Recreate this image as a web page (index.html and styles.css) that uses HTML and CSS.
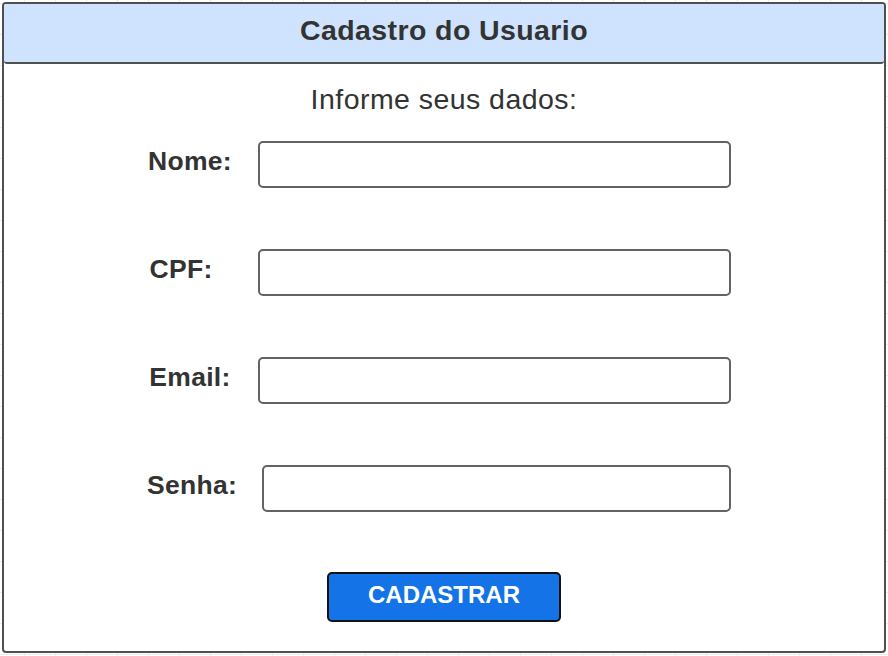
FILE: index.html
```html
<!DOCTYPE html>
<html lang="pt">
<head>
<meta charset="utf-8">
<title>Cadastro do Usuario</title>
<link rel="stylesheet" href="styles.css">
</head>
<body>
<div class="frame">
  <div class="header"><h1 class="title">Cadastro do Usuario</h1></div>
  <div class="content">
    <p class="subtitle">Informe seus dados:</p>
    <div class="fields">
      <div class="row"><label class="label">Nome:</label><div class="input"></div></div>
      <div class="row"><label class="label label-cpf">CPF:</label><div class="input"></div></div>
      <div class="row"><label class="label">Email:</label><div class="input"></div></div>
      <div class="row"><label class="label label-senha">Senha:</label><div class="input input-senha"></div></div>
    </div>
    <div class="actions"><button class="btn">CADASTRAR</button></div>
  </div>
</div>
</body>
</html>
```
FILE: styles.css
```css
html, body {
  margin: 0;
  padding: 0;
}
body {
  width: 888px;
  height: 656px;
  background-color: #ffffff;
  background-image:
    linear-gradient(to right, #ececec 1px, transparent 1px),
    linear-gradient(to bottom, #ececec 1px, transparent 1px);
  background-size: 31px 31px;
  background-position: 24px 3px;
  font-family: "Liberation Sans", Arial, sans-serif;
  color: #333333;
  overflow: hidden;
}
.frame {
  box-sizing: border-box;
  margin: 2px 0 0 2px;
  width: 884px;
  height: 651px;
  border: 2px solid #505050;
  border-radius: 4px;
  background: #ffffff;
  display: flex;
  flex-direction: column;
}
.header {
  box-sizing: border-box;
  height: 60px;
  background: #cfe2fe;
  border-bottom: 2px solid #505050;
  border-radius: 2px 2px 3px 3px;
  display: flex;
  align-items: center;
  justify-content: center;
  padding-bottom: 6px;
}
.title {
  margin: 0;
  font-size: 28.5px;
  font-weight: bold;
  letter-spacing: 0.4px;
  line-height: 32px;
  color: #333333;
}
.content {
  display: flex;
  flex-direction: column;
  align-items: center;
}
.subtitle {
  margin: 19px 0 0 0;
  font-size: 28.5px;
  letter-spacing: 0.45px;
  line-height: 32px;
  color: #333333;
}
.fields {
  margin-top: 26px;
  display: flex;
  flex-direction: column;
  gap: 61px;
  width: 100%;
}
.row {
  display: flex;
  align-items: center;
  padding-left: 132px;
}
.label {
  width: 108px;
  text-align: center;
  font-size: 26.5px;
  font-weight: bold;
  letter-spacing: 0.3px;
  line-height: 30px;
  margin-bottom: 8px;
  color: #333333;
}
.label-cpf {
  width: 90px;
  margin-right: 18px;
}
.label-senha {
  width: 112px;
}
.input {
  box-sizing: border-box;
  margin-left: 14px;
  width: 473px;
  height: 47px;
  border: 2px solid #636363;
  border-radius: 5px;
  background: #ffffff;
}
.input-senha {
  width: 469px;
}
.actions {
  margin-top: 60px;
}
.btn {
  box-sizing: border-box;
  width: 234px;
  height: 50px;
  background: #1473e6;
  border: 2px solid #111111;
  border-radius: 5px;
  color: #ffffff;
  font-family: "Liberation Sans", Arial, sans-serif;
  font-size: 24px;
  font-weight: bold;
  padding: 0 0 4px 0;
}
```
